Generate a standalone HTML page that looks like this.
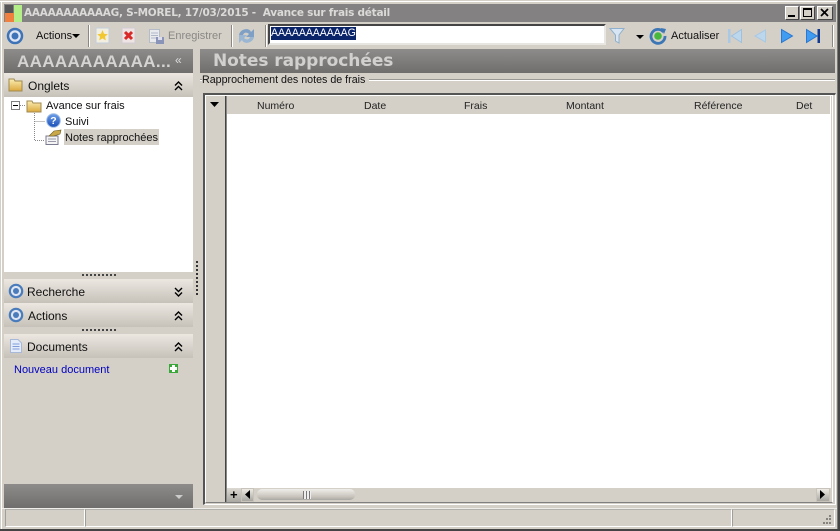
<!DOCTYPE html>
<html>
<head>
<meta charset="utf-8">
<style>
html,body{margin:0;padding:0}
body{width:840px;height:531px;overflow:hidden;position:relative;background:#d4d0c8;font-family:"Liberation Sans",sans-serif;font-size:11px;color:#111}
div,span,svg{position:absolute;box-sizing:border-box}
.t{white-space:nowrap;line-height:14px}
.grey{background:linear-gradient(#8e8c8b,#6f6e6d)}
.bar{left:4px;width:189px;height:24px;background:linear-gradient(#ece8e1,#c6c2ba)}
.h{top:99px;line-height:14px;white-space:nowrap;font-size:10.5px;color:#222}
.sep{width:2px;background:#8a8880;border-right:1px solid #fff}
</style>
</head>
<body>
<svg style="left:0;top:0" width="0" height="0"><defs>
<linearGradient id="fo" x1="0" y1="0" x2="0" y2="1"><stop offset="0" stop-color="#fbeeb4"/><stop offset="1" stop-color="#dca83c"/></linearGradient>
<linearGradient id="bl" x1="0" y1="0" x2="0" y2="1"><stop offset="0" stop-color="#6f9fe8"/><stop offset="1" stop-color="#1a4fb8"/></linearGradient>
</defs></svg>
<!-- window frame -->
<div style="left:0;top:0;width:840px;height:2px;background:#d4d0c8;border-bottom:1px solid #fff"></div>
<div style="left:1px;top:1px;width:1px;height:528px;background:#fff"></div>
<div style="left:837px;top:1px;width:1px;height:528px;background:#777"></div>
<div style="left:838px;top:0;width:2px;height:531px;background:#444"></div>
<div style="left:0;top:529px;width:840px;height:2px;background:#444"></div>

<!-- title bar -->
<div style="left:4px;top:4px;width:832px;height:18px;background:#848182"></div>
<div style="left:5px;top:5px;width:8px;height:8px;background:#555"></div>
<div style="left:5px;top:13px;width:9px;height:9px;background:#f08040"></div>
<div style="left:14px;top:5px;width:8px;height:17px;background:#b4ee88"></div>
<div class="t" style="left:24px;top:6px;font:bold 10.5px/14px 'DejaVu Sans',sans-serif;color:#dcdad8;letter-spacing:-.25px">AAAAAAAAAAAG, S-MOREL, 17/03/2015 -&nbsp; Avance sur frais détail</div>
<div style="left:785px;top:6px;width:14px;height:14px;background:#d4d0c8;border:1px solid;border-color:#fff #444 #444 #fff"><div style="left:2px;top:8px;width:7px;height:2px;background:#000"></div></div>
<div style="left:800px;top:6px;width:15px;height:14px;background:#d4d0c8;border:1px solid;border-color:#fff #444 #444 #fff"><div style="left:2px;top:1px;width:9px;height:9px;border:1px solid #000;border-top-width:2px"></div></div>
<div style="left:817px;top:6px;width:16px;height:14px;background:#d4d0c8;border:1px solid;border-color:#fff #444 #444 #fff">
<svg style="left:2px;top:1px" width="10" height="10"><path d="M1 1L8 8M8 1L1 8" stroke="#000" stroke-width="1.7"/></svg></div>

<!-- toolbar -->
<svg style="left:6px;top:27px" width="18" height="18"><circle cx="9" cy="9" r="7" fill="#dfe6f2" stroke="#3f73b8" stroke-width="2.5"/><circle cx="9" cy="9" r="3.5" fill="#3f73b8"/></svg>
<div class="t" style="left:36px;top:29px">Actions</div>
<svg style="left:72px;top:34px" width="8" height="5"><path d="M0 0H8L4 4Z" fill="#000"/></svg>
<div class="sep" style="left:88px;top:25px;height:22px"></div>
<svg style="left:95px;top:27px" width="15" height="17"><rect x="1" y="1" width="13" height="15" fill="#f2efe0" stroke="#c4cedc"/><path d="M7.5 3L9 6.7L12.8 7.2L10 9.6L10.8 13.4L7.5 11.4L4.2 13.4L5 9.6L2.2 7.2L6 6.7Z" fill="#f2c832"/></svg>
<svg style="left:121px;top:27px" width="15" height="17"><rect x="1" y="1" width="13" height="15" fill="#efe4e4" stroke="#d0ccd4"/><path d="M4 5L11 12M11 5L4 12" stroke="#d82828" stroke-width="3"/></svg>
<svg style="left:148px;top:28px" width="17" height="17"><rect x="1.5" y="1.5" width="10" height="13" fill="#e8eaee" stroke="#b4bcc8"/><path d="M3 5H10M3 7.5H10M3 10H8" stroke="#b0b8c8"/><rect x="8" y="9" width="8" height="7" fill="#8a94b8"/><rect x="10" y="9" width="4" height="3" fill="#dde"/></svg>
<div class="t" style="left:168px;top:29px;color:#8a8884">Enregistrer</div>
<div class="sep" style="left:231px;top:25px;height:22px"></div>
<svg style="left:237px;top:26px" width="19" height="20"><path d="M2 9C3 3 12 1 14 6L17 3V11H9L12 8C10 6 7 6 6 9Z" fill="#7fa0c4"/><path d="M17 11C16 17 7 19 5 14L2 17V9H10L7 12C9 14 12 14 13 11Z" fill="#9ab6d2"/></svg>
<div class="sep" style="left:265px;top:25px;height:22px"></div>
<!-- input -->
<div style="left:268px;top:24px;width:338px;height:21px;background:#fff;border:2px solid;border-color:#444 #e8e6e0 #e8e6e0 #444"></div>
<div class="t" style="left:271px;top:27px;height:13px;width:85px;background:#0a246a;color:#fff;line-height:13px;font-size:10.6px;overflow:hidden;letter-spacing:-.1px">AAAAAAAAAAAG</div>
<svg style="left:609px;top:27px" width="17" height="18"><path d="M1 1.5H15L10 8V16L6.5 14V8Z" fill="#d8e6f3" stroke="#8fb0cd"/></svg>
<svg style="left:636px;top:35px" width="8" height="5"><path d="M0 0H8L4 4Z" fill="#000"/></svg>
<svg style="left:649px;top:27px" width="18" height="18"><path d="M14.5 5A7 7 0 1 0 16 9" fill="none" stroke="#3d76b5" stroke-width="2.8"/><path d="M12 1L17 2L15 7Z" fill="#3d76b5"/><circle cx="9" cy="9" r="3.8" fill="#47b83c"/></svg>
<div class="t" style="left:671px;top:29px;font-size:11px">Actualiser</div>
<svg style="left:727px;top:28px" width="16" height="16"><rect x="1" y="1" width="2.5" height="14" fill="#a9c8e4"/><path d="M14.5 1.5V14.5L4.5 8Z" fill="#bcd6ec" stroke="#a0c0de"/></svg>
<svg style="left:753px;top:29px" width="14" height="14"><path d="M12.5 1V13L2 7Z" fill="#bcd6ec" stroke="#a9c8e4"/></svg>
<svg style="left:780px;top:28px" width="14" height="16"><path d="M1.5 1.5V14.5L12.5 8Z" fill="#3f9cf0" stroke="#2a78d0"/></svg>
<svg style="left:805px;top:28px" width="17" height="16"><path d="M1.5 1.5V14.5L12 8Z" fill="#3f9cf0" stroke="#2a78d0"/><rect x="12.5" y="1" width="2.5" height="14" fill="#123a90"/></svg>
<div class="sep" style="left:832px;top:25px;height:22px"></div>

<!-- left panel -->
<div class="grey" style="left:4px;top:49px;width:189px;height:24px"></div>
<div class="t" style="left:17px;top:52px;font:bold 17px/19px 'Liberation Sans',sans-serif;color:#d6d4d2;letter-spacing:.35px">AAAAAAAAAAA...</div>
<div class="t" style="left:175px;top:53px;font:12px/14px 'Liberation Sans',sans-serif;color:#ddd">«</div>
<div class="bar" style="top:73px"></div>
<svg style="left:8px;top:77px" width="16" height="15"><path d="M1 2H6L7 4H14V14H1Z" fill="url(#fo)" stroke="#a08a50"/></svg>
<div class="t" style="left:28px;top:79px;font-size:12px">Onglets</div>
<svg style="left:174px;top:81px" width="9" height="10"><path d="M1 4.5L4.5 1L8 4.5M1 9L4.5 5.5L8 9" fill="none" stroke="#000" stroke-width="1.4"/></svg>
<!-- tree -->
<div style="left:4px;top:97px;width:189px;height:175px;background:#fff"></div>
<div style="left:11px;top:101px;width:9px;height:9px;border:1px solid #808080;background:#fff"><div style="left:1px;top:3px;width:5px;height:1px;background:#000"></div></div>
<svg style="left:20px;top:101px" width="30" height="46"><path d="M0 4.5H6M14.5 10V39.5H25M14.5 20.5H25" stroke="#888" stroke-dasharray="1 1" fill="none"/></svg>
<svg style="left:26px;top:99px" width="16" height="14"><path d="M1 2H6L7 4H15V13H1Z" fill="url(#fo)" stroke="#a08a50"/></svg>
<div class="t" style="left:46px;top:99px">Avance sur frais</div>
<svg style="left:46px;top:113px" width="15" height="15"><circle cx="7.5" cy="7.5" r="6.8" fill="url(#bl)" stroke="#9dbce6"/><text x="7.5" y="11.2" text-anchor="middle" font-family="Liberation Sans" font-weight="bold" font-size="10.5" fill="#fff">?</text></svg>
<div class="t" style="left:65px;top:115px">Suivi</div>
<svg style="left:44px;top:129px" width="18" height="16"><rect x="2" y="7" width="12" height="8.5" fill="#f4f4f4" stroke="#7a7a90"/><path d="M4 10H12M4 12.5H12" stroke="#99a"/><path d="M5 7L10 2L17 1L16 5L10 7Z" fill="#c8a848" stroke="#6a5a20" stroke-width=".6"/></svg>
<div style="left:64px;top:129px;width:95px;height:16px;background:#d4d0c8"></div>
<div class="t" style="left:65px;top:131px">Notes rapprochées</div>
<div style="left:82px;top:274px;width:34px;height:2px;background:repeating-linear-gradient(90deg,#444 0 2px,transparent 2px 4px)"></div>

<div class="bar" style="top:279px"></div>
<svg style="left:8px;top:283px" width="16" height="16"><circle cx="8" cy="8" r="6.2" fill="#dfe6f2" stroke="#4a7cbc" stroke-width="2.2"/><circle cx="8" cy="8" r="3" fill="#4a7cbc"/></svg>
<div class="t" style="left:27px;top:285px;font-size:12px">Recherche</div>
<svg style="left:174px;top:287px" width="9" height="10"><path d="M1 1L4.5 4.5L8 1M1 5.5L4.5 9L8 5.5" fill="none" stroke="#000" stroke-width="1.4"/></svg>
<div class="bar" style="top:303px"></div>
<svg style="left:8px;top:307px" width="16" height="16"><circle cx="8" cy="8" r="6.2" fill="#dfe6f2" stroke="#4a7cbc" stroke-width="2.2"/><circle cx="8" cy="8" r="3" fill="#4a7cbc"/></svg>
<div class="t" style="left:28px;top:309px;font-size:12px">Actions</div>
<svg style="left:174px;top:311px" width="9" height="10"><path d="M1 4.5L4.5 1L8 4.5M1 9L4.5 5.5L8 9" fill="none" stroke="#000" stroke-width="1.4"/></svg>
<div style="left:82px;top:329px;width:34px;height:2px;background:repeating-linear-gradient(90deg,#444 0 2px,transparent 2px 4px)"></div>
<div class="bar" style="top:334px"></div>
<svg style="left:9px;top:338px" width="14" height="16"><path d="M1.5 1.5H9L12.5 5V14.5H1.5Z" fill="#e4ecfa" stroke="#a8b8d8"/><path d="M3.5 6H10.5M3.5 8.5H10.5M3.5 11H10.5" stroke="#7f9cd8"/></svg>
<div class="t" style="left:27px;top:340px;font-size:12px">Documents</div>
<svg style="left:174px;top:342px" width="9" height="10"><path d="M1 4.5L4.5 1L8 4.5M1 9L4.5 5.5L8 9" fill="none" stroke="#000" stroke-width="1.4"/></svg>
<div class="t" style="left:14px;top:363px;color:#0000c0">Nouveau document</div>
<div style="left:169px;top:364px;width:9px;height:9px;background:#3aa838"><div style="left:3px;top:1px;width:3px;height:7px;background:#fff"></div><div style="left:1px;top:3px;width:7px;height:3px;background:#fff"></div></div>
<div class="grey" style="left:4px;top:484px;width:189px;height:24px"></div>
<svg style="left:175px;top:495px" width="9" height="6"><path d="M0 0H8L4 4Z" fill="#ccc"/></svg>

<!-- splitter -->
<div style="left:196px;top:261px;width:2px;height:35px;background:repeating-linear-gradient(#333 0 2px,transparent 2px 4px)"></div>

<!-- right header -->
<div class="grey" style="left:200px;top:49px;width:635px;height:24px"></div>
<div class="t" style="left:213px;top:50px;font:bold 17px/22px 'DejaVu Sans',sans-serif;color:#d2d0ce;letter-spacing:-.05px">Notes rapprochées</div>
<div style="left:200px;top:79px;width:635px;height:2px;background:#9a9892;border-bottom:1px solid #fff"></div>
<div class="t" style="left:202px;top:73px;background:#d4d0c8;padding-right:4px;height:15px;line-height:15px;font-size:10.7px">Rapprochement des notes de frais</div>

<!-- grid -->
<div style="left:203px;top:93px;width:633px;height:412px;background:#d4d0c8;border:1px solid;border-color:#555 #fff #fff #555;border-top-width:2px;border-left-width:2px"></div>
<div style="left:205px;top:95px;width:628px;height:408px;border:1px solid;border-color:#fff #fff #808080 #fff"></div>
<div style="left:225px;top:96px;width:1px;height:406px;background:#444"></div>
<div style="left:226px;top:96px;width:1px;height:406px;background:#888"></div>
<div style="left:227px;top:114px;width:603px;height:374px;background:#fff"></div>
<div style="left:830px;top:96px;width:1px;height:392px;background:#fff"></div>
<svg style="left:210px;top:102px" width="9" height="6"><path d="M0 0H9L4.5 5Z" fill="#000"/></svg>
<div class="h" style="left:257px">Numéro</div>
<div class="h" style="left:364px">Date</div>
<div class="h" style="left:464px">Frais</div>
<div class="h" style="left:566px">Montant</div>
<div class="h" style="left:694px">Référence</div>
<div class="h" style="left:796px">Det</div>
<!-- scrollbar -->
<div style="left:227px;top:488px;width:14px;height:14px;background:linear-gradient(#dcd8d2,#aaa8a2)"></div>
<div class="t" style="left:230px;top:488px;font-size:13px;color:#000;font-weight:bold;line-height:14px">+</div>
<div style="left:241px;top:488px;width:589px;height:14px;background:#d4d0c8"></div>
<div style="left:241px;top:488px;width:13px;height:14px;background:linear-gradient(#eeeae4,#a8a6a0);border:1px solid #c8c4bc"></div>
<svg style="left:245px;top:490px" width="6" height="10"><path d="M5 0V9L0 4.5Z" fill="#000"/></svg>
<div style="left:257px;top:489px;width:98px;height:11px;border-radius:5px;background:linear-gradient(#f0eeea,#c8c4bc 70%,#aaa8a2)"></div>
<div style="left:303px;top:491px;width:8px;height:8px;background:repeating-linear-gradient(90deg,#777 0 1px,#eee 1px 3px)"></div>
<div style="left:816px;top:488px;width:14px;height:14px;background:linear-gradient(#eeeae4,#a8a6a0);border:1px solid #c8c4bc"></div>
<svg style="left:820px;top:490px" width="6" height="10"><path d="M0 0V9L5 4.5Z" fill="#000"/></svg>

<!-- status bar -->
<div style="left:2px;top:508px;width:835px;height:1px;background:#f0eeea"></div>
<div style="left:5px;top:509px;width:80px;height:18px;border:1px solid;border-color:#b4b2ac #fff #fff #a09e98"></div>
<div style="left:85px;top:509px;width:647px;height:18px;border:1px solid;border-color:#b4b2ac #fff #fff #a09e98"></div>
<div style="left:732px;top:509px;width:103px;height:18px;border:1px solid;border-color:#b4b2ac #fff #fff #a09e98"></div>
<svg style="left:820px;top:514px" width="13" height="13"><path d="M9 1h2v2h-2zM6 4h2v2H6zM9 4h2v2h-2zM3 8h2v2H3zM6 8h2v2H6zM9 8h2v2h-2z" fill="#85837d"/></svg>
</body>
</html>
